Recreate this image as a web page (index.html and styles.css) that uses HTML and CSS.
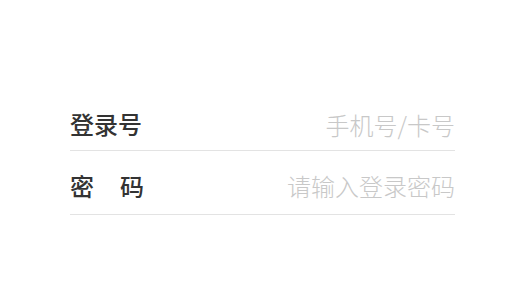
FILE: index.html
```html
<!DOCTYPE html>
<html lang="zh-CN">
<head>
<meta charset="utf-8">
<link rel="stylesheet" href="styles.css">
</head>
<body>
<main class="page">
  <form class="login-form">
    <label class="field">
      <span class="field-label">登录号</span>
      <input class="field-input" type="text" placeholder="手机号/卡号">
    </label>
    <label class="field">
      <span class="field-label spaced"><span>密</span><span>码</span></span>
      <input class="field-input" type="password" placeholder="请输入登录密码">
    </label>
  </form>
</main>
</body>
</html>
```
FILE: styles.css
```css
html, body {
  margin: 0;
  padding: 0;
  background: #ffffff;
}
body {
  width: 527px;
  height: 282px;
  overflow: hidden;
  font-family: "Noto Sans CJK SC", "Noto Sans", sans-serif;
}
.page {
  padding: 88px 72px 0 70px;
}
.login-form {
  display: flex;
  flex-direction: column;
}
.field {
  display: flex;
  align-items: center;
  height: 63px;
  padding-top: 10px;
  box-sizing: border-box;
  border-bottom: 1.5px solid #e3e3e3;
}
.field + .field {
  height: 64px;
  padding-top: 6px;
}
.field-label {
  width: 74px;
  flex: none;
  font-size: 24px;
  font-weight: 500;
  color: #333333;
  line-height: 1;
}
.spaced {
  display: flex;
  justify-content: space-between;
}
.field-input {
  flex: 1;
  min-width: 0;
  border: 0;
  outline: 0;
  background: transparent;
  padding: 0;
  text-align: right;
  font-family: "Noto Sans CJK SC", "Noto Sans", sans-serif;
  font-size: 24px;
  font-weight: 300;
  color: #333;
}
.field-input::placeholder {
  color: #c8c8c8;
}
```
